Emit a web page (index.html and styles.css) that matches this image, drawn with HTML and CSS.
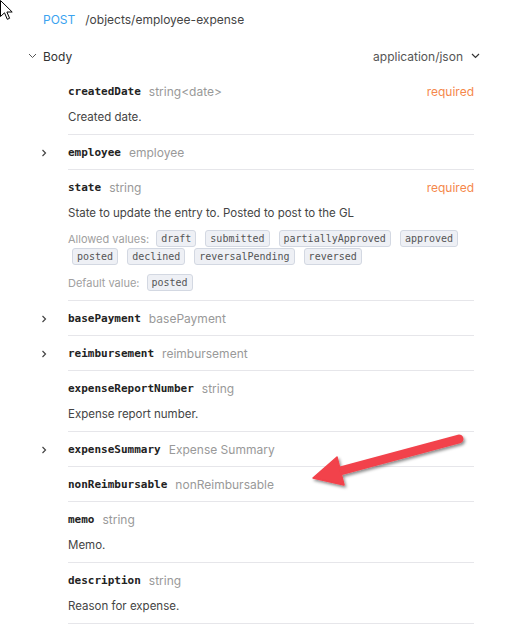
FILE: index.html
```html
<!DOCTYPE html>
<html>
<head>
<meta charset="utf-8">
<link rel="stylesheet" href="styles.css">
</head>
<body>
<div class="page">
  <div class="endpoint"><span class="method">POST</span><span class="path">/objects/employee-expense</span></div>
  <div class="body-head">
    <span class="chev-down"><svg width="9" height="6" viewBox="0 0 9 6"><path d="M1 1l3.5 3.5L8 1" fill="none" stroke="#555" stroke-width="1"/></svg></span>
    <span class="body-label">Body</span>
    <span class="media">application/json<svg width="9" height="6" viewBox="0 0 9 6"><path d="M1 1l3.5 3.5L8 1" fill="none" stroke="#333" stroke-width="1.2"/></svg></span>
  </div>
  <div class="fields">
    <div class="row">
      <div class="title"><span class="name">createdDate</span><span class="type">string&lt;date&gt;</span><span class="req">required</span></div>
      <div class="desc">Created date.</div>
    </div>
    <div class="row">
      <div class="title"><span class="chev"><svg width="6" height="8" viewBox="0 0 6 8"><path d="M1.5 1l3 3-3 3" fill="none" stroke="#444" stroke-width="1.2"/></svg></span><span class="name">employee</span><span class="type">employee</span></div>
    </div>
    <div class="row state">
      <div class="title"><span class="name">state</span><span class="type">string</span><span class="req">required</span></div>
      <div class="desc">State to update the entry to. Posted to post to the GL</div>
      <div class="allowed"><span class="label">Allowed values:</span><span class="chip">draft</span><span class="chip">submitted</span><span class="chip">partiallyApproved</span><span class="chip">approved</span><span class="chip">posted</span><span class="chip">declined</span><span class="chip">reversalPending</span><span class="chip">reversed</span></div>
      <div class="default"><span class="label">Default value:</span><span class="chip">posted</span></div>
    </div>
    <div class="row">
      <div class="title"><span class="chev"><svg width="6" height="8" viewBox="0 0 6 8"><path d="M1.5 1l3 3-3 3" fill="none" stroke="#444" stroke-width="1.2"/></svg></span><span class="name">basePayment</span><span class="type">basePayment</span></div>
    </div>
    <div class="row">
      <div class="title"><span class="chev"><svg width="6" height="8" viewBox="0 0 6 8"><path d="M1.5 1l3 3-3 3" fill="none" stroke="#444" stroke-width="1.2"/></svg></span><span class="name">reimbursement</span><span class="type">reimbursement</span></div>
    </div>
    <div class="row">
      <div class="title"><span class="name">expenseReportNumber</span><span class="type">string</span></div>
      <div class="desc">Expense report number.</div>
    </div>
    <div class="row">
      <div class="title"><span class="chev"><svg width="6" height="8" viewBox="0 0 6 8"><path d="M1.5 1l3 3-3 3" fill="none" stroke="#444" stroke-width="1.2"/></svg></span><span class="name">expenseSummary</span><span class="type">Expense Summary</span></div>
    </div>
    <div class="row">
      <div class="title"><span class="name">nonReimbursable</span><span class="type">nonReimbursable</span></div>
    </div>
    <div class="row">
      <div class="title"><span class="name">memo</span><span class="type">string</span></div>
      <div class="desc">Memo.</div>
    </div>
    <div class="row">
      <div class="title"><span class="name">description</span><span class="type">string</span></div>
      <div class="desc">Reason for expense.</div>
    </div>
  </div>
</div>
<svg class="cursor" width="14" height="22" viewBox="0 0 14 22"><path d="M0.5 0.5V16.5L4.5 12.8L7.3 19.3L9.6 18.3L6.9 12H12.2Z" fill="#fff" stroke="#000" stroke-width="1"/></svg>
<svg class="arrow" width="175" height="72" viewBox="0 0 175 72">
  <defs><filter id="sh" x="-20%" y="-40%" width="140%" height="180%"><feDropShadow dx="1.5" dy="2" stdDeviation="1.5" flood-color="#000" flood-opacity="0.45"/></filter></defs>
  <g filter="url(#sh)">
    <path d="M159 14 L40 46" stroke="#f2424b" stroke-width="9" stroke-linecap="round" fill="none"/>
    <path d="M13 53 L37 32 L44 60 Z" fill="#f2424b" stroke="#f2424b" stroke-width="1.5" stroke-linejoin="round"/>
  </g>
</svg>
</body>
</html>
```
FILE: styles.css
```css
* { box-sizing: border-box; }
html, body { margin: 0; padding: 0; background: #fff; }
body { font-family: Inter, "Noto Sans", sans-serif; color: #333; }
.page { width: 529px; height: 632px; overflow: hidden; }
.endpoint { height: 38px; padding-left: 43px; display: flex; align-items: center; font-size: 12px; }
.method { color: #3aa3f0; margin-right: 10px; }
.path { color: #444; }
.body-head { display: flex; align-items: center; height: 36px; padding-left: 28px; padding-right: 49px; font-size: 12px; }
.chev-down { width: 15px; display: flex; }
.body-label { color: #333; }
.media { margin-left: auto; color: #555; display: flex; align-items: center; gap: 8px; }
.fields { margin-left: 68px; width: 406px; }
.row { padding: 9px 0 8px; border-bottom: 1px solid #e6e6ea; }
.row.state { padding-bottom: 9px; }
.title { display: flex; align-items: center; height: 17px; }
.chev { width: 27px; margin-left: -27px; display: flex; justify-content: flex-start; }
.name { font-family: "DejaVu Sans Mono", monospace; font-weight: bold; font-size: 11px; color: #222; }
.type { margin-left: 8px; font-size: 12px; color: #999; }
.req { margin-left: auto; font-size: 12px; color: #f5884c; }
.desc { margin-top: 9px; height: 17px; line-height: 17px; font-size: 11.5px; color: #444; }
.allowed { margin-top: 8px; display: flex; flex-wrap: wrap; align-items: center; row-gap: 1px; column-gap: 9px; }
.default { margin-top: 9px; display: flex; align-items: center; gap: 9px; }
.label { font-size: 11px; color: #a0a0a0; margin-right: -2px; }
.chip { font-family: "DejaVu Sans Mono", monospace; font-size: 10px; color: #555; background: #eef0f5; border: 1px solid #d3d8e2; border-radius: 3px; height: 17px; line-height: 15px; padding: 0 4px; }
.allowed .chip:nth-child(6) { margin-left: 4px; }
.cursor { position: absolute; left: 0; top: 0; }
.arrow { position: absolute; left: 300px; top: 425px; }
```
